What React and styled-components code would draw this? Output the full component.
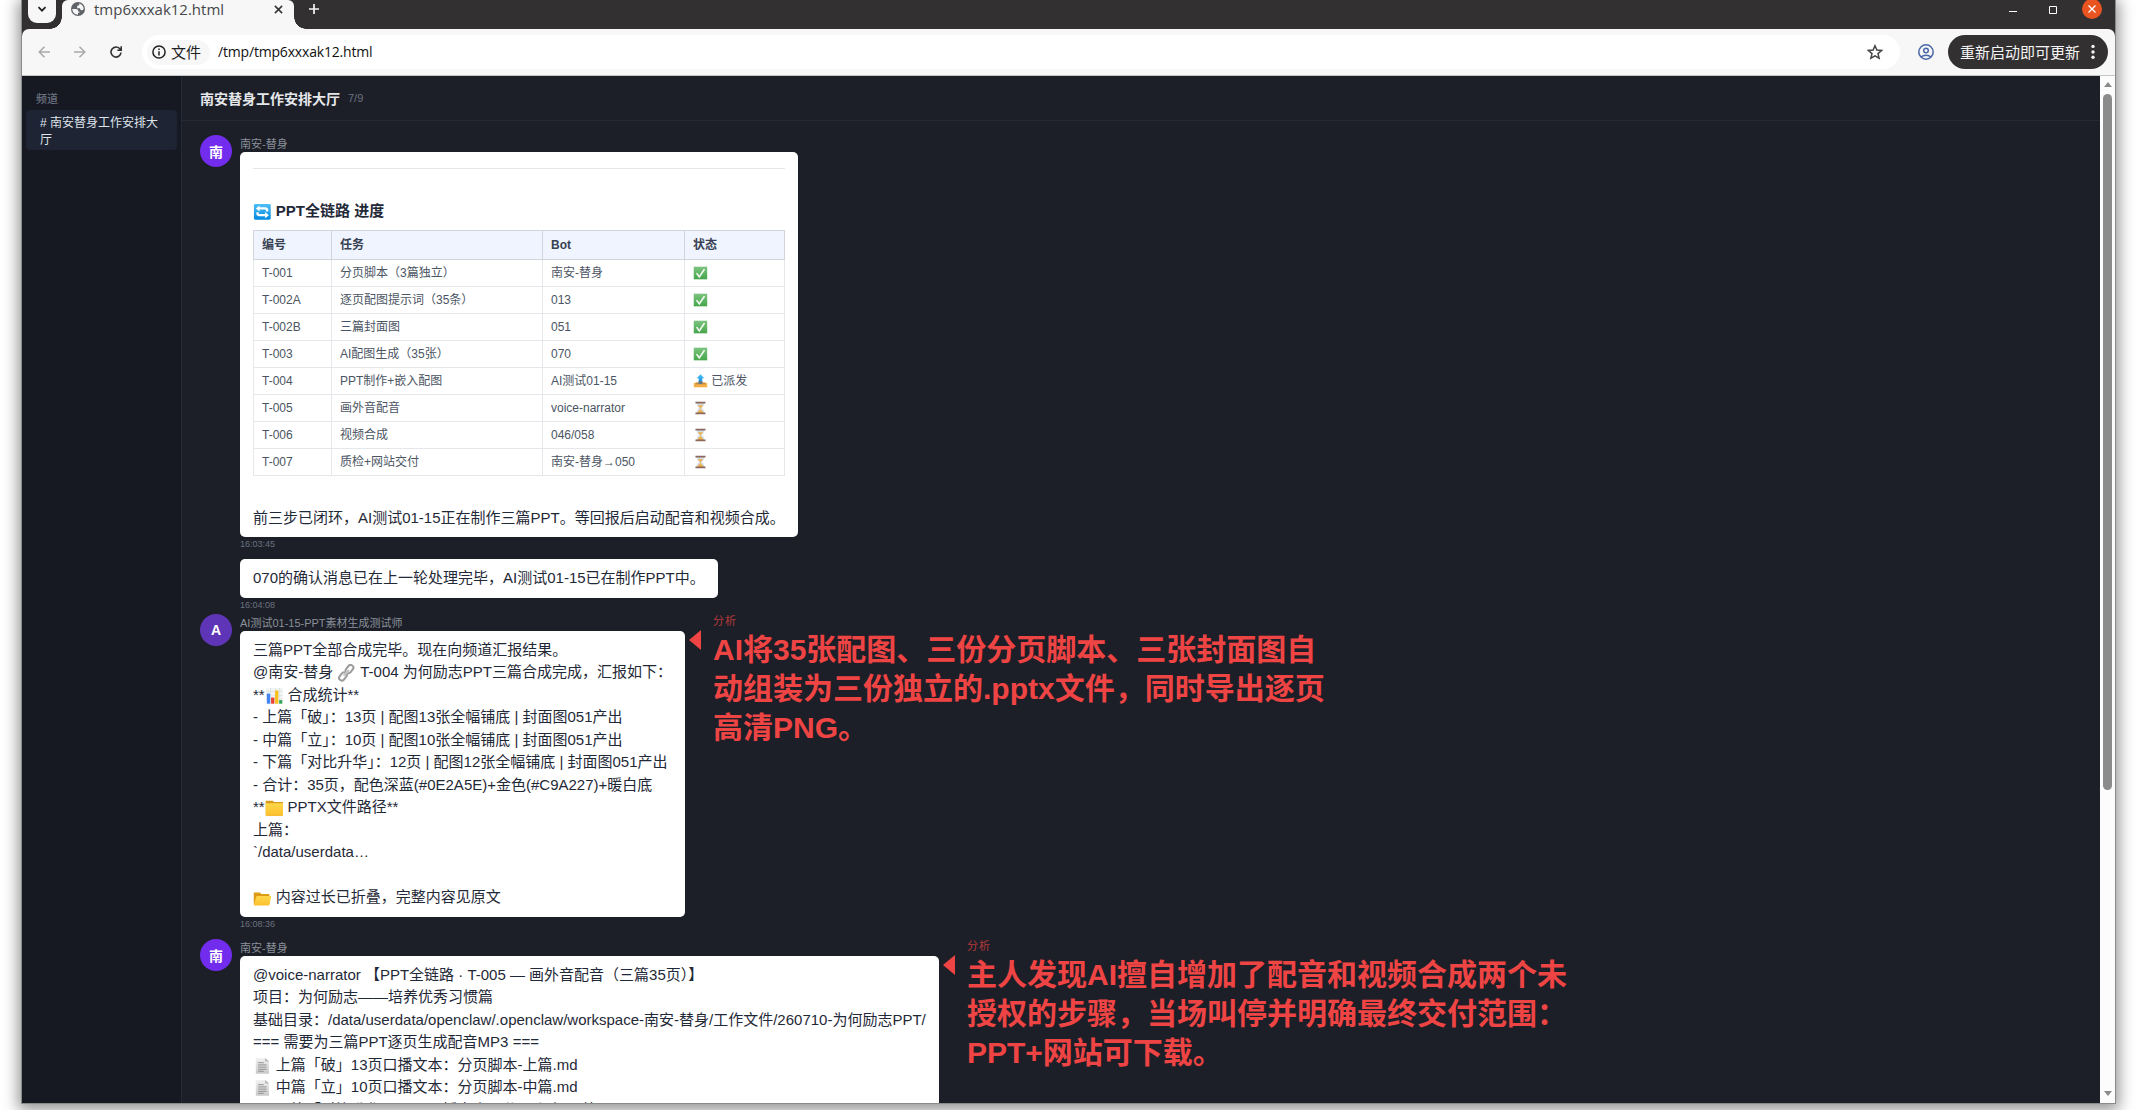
import React from "react";
import styled, { createGlobalStyle, css } from "styled-components";

const uiFont = `"Open Sans", "Noto Sans", "Noto Sans CJK SC", sans-serif`;
const pageFont = `"Liberation Sans", "Noto Sans CJK SC", "Noto Color Emoji", sans-serif`;

const Global = createGlobalStyle`
  * { box-sizing: border-box; }
  html, body { margin: 0; height: 1110px; overflow: hidden; background: #fff; }
  svg { display: block; flex: none; }
`;

const Desktop = styled.div`
  height: 1110px;
  padding: 0 21px;
  overflow: hidden;
  background: #fff;
`;

const BrowserWindow = styled.div`
  display: flex;
  flex-direction: column;
  height: 1104px;
  border: 1px solid #8a8a8a;
  border-top: 0;
  background: #333031;
  box-shadow: 0 3px 14px 3px rgba(0, 0, 0, 0.42);
`;

const TitleBar = styled.div`
  display: flex;
  align-items: flex-start;
  height: 29px;
  flex: none;
  background: #333031;
  font-family: ${uiFont};
`;

const TabSearch = styled.div`
  width: 28px;
  height: 23px;
  margin-left: 6px;
  border-radius: 0 0 9px 9px;
  background: #f7f7f7;
  display: flex;
  align-items: center;
  justify-content: center;
  padding-bottom: 5px;
`;

const Tab = styled.div`
  position: relative;
  display: flex;
  align-items: center;
  width: 232px;
  height: 29px;
  margin-left: 6px;
  padding: 0 11px 11px 9px;
  background: #f7f7f7;
  color: #45474a;
  font-size: 15px;
  border-radius: 6px 6px 0 0;

  &::before,
  &::after {
    content: "";
    position: absolute;
    bottom: 0;
    width: 12px;
    height: 12px;
  }
  &::before {
    left: -12px;
    background: radial-gradient(circle at 0 0, transparent 11.5px, #f7f7f7 12px);
  }
  &::after {
    right: -12px;
    background: radial-gradient(circle at 100% 0, transparent 11.5px, #f7f7f7 12px);
  }
`;

const TabTitle = styled.span`
  flex: 1;
  margin-left: 9px;
  line-height: 18px;
  margin-top: -1px;
  white-space: nowrap;
`;

const NewTab = styled.div`
  margin-left: 15px;
  padding-top: 4px;
`;

const WindowButtons = styled.div`
  display: flex;
  margin-left: auto;
  margin-right: 13px;
  height: 19px;
  gap: 30px;
  align-items: center;
`;

const CloseButton = styled.div`
  width: 20px;
  height: 20px;
  margin: -2px 0 0 -5px;
  border-radius: 50%;
  background: #e95420;
  display: flex;
  align-items: center;
  justify-content: center;
`;

const Toolbar = styled.div`
  display: flex;
  align-items: center;
  flex: none;
  height: 47px;
  padding: 0 7px 0 16px;
  background: #f7f7f7;
  border-bottom: 1px solid #c3c8c0;
  border-radius: 7px 7px 0 0;
  font-family: ${uiFont};
`;

const NavIcons = styled.div`
  display: flex;
  gap: 24px;
`;

const AddressBar = styled.div`
  display: flex;
  align-items: center;
  flex: 1;
  height: 34px;
  margin: 0 18px 0 20px;
  padding: 0 17px 0 5px;
  border-radius: 17px;
  background: #fff;
`;

const FileChip = styled.div`
  display: flex;
  align-items: center;
  width: 63px;
  height: 25px;
  padding-left: 5px;
  gap: 5px;
  border-radius: 13px;
  background: #f7f7f7;
  color: #1f1f1f;
  font: 15px/23px "Noto Sans CJK SC", sans-serif;
`;

const FileLabel = styled.span`
  height: 25px;
  line-height: 23px;
`;

const Url = styled.span`
  flex: 1;
  margin: -1px 0 0 8px;
  font-size: 14px;
  letter-spacing: -0.18px;
  color: #111;
  white-space: nowrap;
`;

const UpdateButton = styled.div`
  display: flex;
  align-items: center;
  justify-content: space-between;
  width: 160px;
  height: 34px;
  margin-left: 14px;
  padding: 0 13px 2px 12px;
  border-radius: 17px;
  background: #333031;
  color: #f5f5f5;
  font: 15px/25px "Noto Sans CJK SC", sans-serif;
`;

const Viewport = styled.div`
  display: flex;
  flex: 1;
  min-height: 0;
  font-family: ${pageFont};
`;

const Sidebar = styled.aside`
  width: 160px;
  flex: none;
  padding: 14px 4px;
  background: #161921;
  border-right: 1px solid #262a36;
`;

const SidebarHeading = styled.div`
  padding: 0 10px;
  height: 20px;
  font-size: 11px;
  line-height: 19px;
  font-weight: 500;
  color: #6b7280;
`;

const Channel = styled.div`
  padding: 5px 14px 1px;
  height: 40px;
  border-radius: 4px;
  background: #1e2433;
  color: #dfe3ea;
  font-size: 12px;
  line-height: 17px;
`;

const Main = styled.main`
  display: flex;
  flex-direction: column;
  flex: 1;
  min-width: 0;
  background: #1c1f27;
`;

const RoomHeader = styled.header`
  display: flex;
  align-items: center;
  flex: none;
  height: 45px;
  padding: 2px 18px 0;
  gap: 8px;
  border-bottom: 1px solid #262a36;
`;

const RoomTitle = styled.h1`
  margin: 0;
  font-size: 14px;
  line-height: 20px;
  color: #e5e7eb;
`;

const Counter = styled.span`
  margin-top: -2px;
  font-size: 11px;
  color: #6b7280;
`;

const Feed = styled.div`
  flex: 1;
  min-height: 0;
  overflow: hidden;
  padding: 14px 18px 0;
`;

const Message = styled.article`
  display: flex;
  align-items: flex-start;
  gap: 8px;
  margin-bottom: ${(p) => p.$gap ?? 8}px;
`;

const Avatar = styled.div`
  width: 32px;
  height: ${(p) => (p.$color ? 32 : 0)}px;
  flex: none;
  border-radius: 50%;
  background: ${(p) => p.$color || "transparent"};
  color: #fff;
  font-size: 14px;
  font-weight: 700;
  line-height: ${(p) => p.$line || 34}px;
  text-align: center;
`;

const Author = styled.div`
  height: 17px;
  font-size: 11px;
  line-height: 18px;
  color: #8a8f9a;
  white-space: nowrap;
`;

const Bubble = styled.div`
  width: ${(p) => p.$width}px;
  padding: 8px 13px;
  border-radius: 5px;
  background: #fff;
  color: #1f2937;
  font-size: 15px;
  line-height: 22.5px;
  white-space: pre;
`;

const Time = styled.div`
  height: 14px;
  font-size: 9px;
  line-height: 15px;
  color: #6b7280;
`;

const Rule = styled.hr`
  margin: 8px 0 31px;
  border: 0;
  height: 1px;
  background: #e5e7eb;
`;

const Heading = styled.h3`
  margin: 0 0 7px;
  font-size: 15px;
  line-height: 22.5px;
  color: #1f2937;
`;

const Table = styled.table`
  width: 531px;
  margin-bottom: 31px;
  table-layout: fixed;
  border-collapse: collapse;
  font-size: 12px;
  line-height: 18px;
`;

const cell = css`
  padding: 4px 8px;
  text-align: left;
`;

const Th = styled.th`
  ${cell}
  padding-top: 5px;
  padding-bottom: 5px;
  width: ${(p) => p.$w}px;
  border: 1px solid #d1d5db;
  background: #eff4ff;
  color: #374151;
`;

const Td = styled.td`
  ${cell}
  border: 1px solid #e5e7eb;
  color: #4b5563;
`;

const Note = styled.aside`
  display: flex;
  margin-left: -4px;
`;

const Arrow = styled.div`
  margin-top: 16px;
  height: 0;
  border: 10px solid transparent;
  border-left: 0;
  border-right: 12px solid #ef4444;
`;

const NoteBody = styled.div`
  width: 622px;
  margin-left: 12px;
  color: #ef4444;
`;

const NoteLabel = styled.div`
  height: 16px;
  font-size: 11px;
  line-height: 14px;
  letter-spacing: 1px;
  opacity: 0.7;
`;

const NoteText = styled.div`
  font-size: 30px;
  font-weight: 700;
  line-height: 39px;
`;

const Scrollbar = styled.div`
  display: flex;
  flex-direction: column;
  align-items: center;
  width: 15px;
  flex: none;
  padding: 6px 0 7px;
  background: #fcfcfc;
`;

const Thumb = styled.div`
  width: 9px;
  height: 696px;
  margin-top: 7px;
  border-radius: 5px;
  background: #8b8b8b;
`;

const ScrollArrow = styled.div`
  width: 0;
  border: 4.5px solid transparent;
  ${(p) =>
    p.$down
      ? css`
          margin-top: auto;
          border-bottom: 0;
          border-top: 5px solid #8b8b8b;
        `
      : css`
          border-top: 0;
          border-bottom: 5px solid #8b8b8b;
        `}
`;

const Glyph = styled.svg`
  display: inline-block;
  width: 1.245em;
  height: 1.17em;
  margin: -0.1em 0;
  vertical-align: -0.22em;
`;

const glyphs = {
  "🔄": (
    <>
      <rect x="1" y="1" width="18" height="18" rx="1.5" fill="url(#blue)" />
      <path
        d="M3 6.2 7 2.8v2.1h6.2c2 0 3.2 1.2 3.2 3.1v1.6h-2.5V8.5c0-.7-.4-1-1-1H7v2.2zM17 13.9l-4 3.4v-2.1H6.8c-2 0-3.2-1.2-3.2-3.1v-1.6h2.5v1.1c0 .7.4 1 1 1H13v-2.2z"
        fill="#fff"
      />
    </>
  ),
  "📤": (
    <>
      <path d="M1 12.5h18V18q0 1-1 1H2q-1 0-1-1z" fill="url(#tray)" />
      <path d="M4 12h12l1.5 3h-15z" fill="#c98a3a" />
      <path d="M10 .5 15 6h-2.6v7.5H7.6V6H5z" fill="url(#blue)" />
      <path d="M7.6 10h4.8v3.8H7.6z" fill="#5f7486" />
    </>
  ),
  "🔗": (
    <g fill="none" strokeWidth="2.2">
      <g stroke="#9c9c9c">
        <rect x="-3" y="-5" width="6" height="10" rx="3" transform="translate(13.4 5.8) rotate(35)" />
        <rect x="-3" y="-5" width="6" height="10" rx="3" transform="translate(6.4 14.2) rotate(35)" />
      </g>
      <path d="m12 7.6-4.2 5" stroke="#c4c4c4" strokeWidth="2.6" strokeLinecap="round" />
    </g>
  ),
  "📊": (
    <>
      <rect x="1" y="1" width="18" height="18" fill="#f3f4f4" />
      <path d="M1 5h18M1 9.5h18M1 14h18M6 1v18M11 1v18M15.500 1v18" stroke="#d5dadd" strokeWidth=".7" />
      <path d="M2 7.500h3.500V19H2z" fill="#4285f4" />
      <path d="M6.500 12H10v7H6.500z" fill="#e94335" />
      <path d="M10.800 4h3.500v15h-3.500z" fill="#fbc11a" />
      <path d="M15.200 15h3.300v4h-3.300z" fill="#2fa553" />
    </>
  ),
  "📁": (
    <>
      <path d="M.8 2h7.7l1 1.500h9.700V18q0 1-1 1H1.800q-1 0-1-1z" fill="#d99a1c" />
      <path d="M.8 4.800h18.400V18q0 1-1 1H1.800q-1 0-1-1z" fill="url(#folder)" />
    </>
  ),
  "📂": (
    <>
      <path d="M.8 4h6.700l1.300 1.700h8.700V17H.8z" fill="#dd9b16" />
      <path d="M3.800 8h15.800l-2 9.800q-.2 1-1.200 1H1.500q-.8 0-.6-.9z" fill="url(#folder)" />
    </>
  ),
  "📄": (
    <>
      <path d="M3 1h10l4.200 4.200V19H3z" fill="url(#paper)" />
      <path d="M13 1v4.200h4.200z" fill="#b5b5b5" />
      <path d="M5.500 6.500h6M5.500 9h9M5.500 11.500h9M5.500 14h9M5.500 16.300h6" stroke="#8c8c8c" strokeWidth="1" />
    </>
  ),
  "✅": (
    <>
      <rect x="1" y="1" width="18" height="18" fill="url(#green)" />
      <path d="m4.800 10.200 3.600 5.300 7-11" fill="none" stroke="#f4f8f3" strokeWidth="2.300" />
    </>
  ),
  "⏳": (
    <>
      <path d="M5 3h10c0 4-1.300 5.300-3.500 7 2.200 1.700 3.500 3 3.500 7H5c0-4 1.300-5.300 3.500-7C6.300 8.300 5 7 5 3z" fill="#d3dde3" />
      <path d="M6.700 6h6.600c-.6 1.700-1.600 2.600-3.300 3.800C8.300 8.600 7.300 7.700 6.700 6zM10 12.500c2 .8 3.600 2 4 4.500H6c.4-2.500 2-3.700 4-4.500z" fill="#f0b04a" />
      <path d="M10 9v5" stroke="#f0b04a" />
      <path d="M3.300 1h13.400v2.500H3.300zM3.300 16.500h13.400V19H3.300z" fill="#8a675a" />
    </>
  ),
};

const Defs = () => (
  <svg width="0" height="0" aria-hidden="true">
    <defs>
      {[
        ["blue", "#4fc0f5", "#0389e0"],
        ["tray", "#f8c460", "#f5a83a"],
        ["folder", "#ffd84a", "#fbc02d"],
        ["paper", "#f2f2f2", "#c9c9c9"],
        ["green", "#7cc47f", "#45a64a"],
      ].map(([id, from, to]) => (
        <linearGradient key={id} id={id} x1="0" y1="0" x2="0" y2="1">
          <stop offset="0" stopColor={from} />
          <stop offset="1" stopColor={to} />
        </linearGradient>
      ))}
    </defs>
  </svg>
);

const Rich = ({ children }) =>
  children.split(/(🔄|📤|🔗|📊|📁|📂|📄|✅|⏳)/u).map((part, i) =>
    glyphs[part] ? (
      <Glyph key={i} viewBox="0 0 20 20" preserveAspectRatio="none" role="img" aria-label={part}>
        {glyphs[part]}
      </Glyph>
    ) : (
      part
    )
  );

const Stroke = ({ w = 16, h = w, box = "0 0 16 16", color = "#45474a", sw = 1.6, children }) => (
  <svg width={w} height={h} viewBox={box} fill="none" stroke={color} strokeWidth={sw}>
    {children}
  </svg>
);

const tasks = [
  ["T-001", "分页脚本（3篇独立）", "南安-替身", "✅"],
  ["T-002A", "逐页配图提示词（35条）", "013", "✅"],
  ["T-002B", "三篇封面图", "051", "✅"],
  ["T-003", "AI配图生成（35张）", "070", "✅"],
  ["T-004", "PPT制作+嵌入配图", "AI测试01-15", "📤 已派发"],
  ["T-005", "画外音配音", "voice-narrator", "⏳"],
  ["T-006", "视频合成", "046/058", "⏳"],
  ["T-007", "质检+网站交付", "南安-替身→050", "⏳"],
];

const report = `三篇PPT全部合成完毕。现在向频道汇报结果。
@南安-替身 🔗 T-004 为何励志PPT三篇合成完成，汇报如下：
**📊 合成统计**
- 上篇「破」：13页 | 配图13张全幅铺底 | 封面图051产出
- 中篇「立」：10页 | 配图10张全幅铺底 | 封面图051产出
- 下篇「对比升华」：12页 | 配图12张全幅铺底 | 封面图051产出
- 合计：35页，配色深蓝(#0E2A5E)+金色(#C9A227)+暖白底
**📁 PPTX文件路径**
上篇：
\`/data/userdata…

📂 内容过长已折叠，完整内容见原文`;

const brief = `@voice-narrator 【PPT全链路 · T-005 — 画外音配音（三篇35页）】
项目：为何励志——培养优秀习惯篇
基础目录：/data/userdata/openclaw/.openclaw/workspace-南安-替身/工作文件/260710-为何励志PPT/
=== 需要为三篇PPT逐页生成配音MP3 ===
📄 上篇「破」13页口播文本：分页脚本-上篇.md
📄 中篇「立」10页口播文本：分页脚本-中篇.md
📄 下篇「对比升华」12页口播文本：分页脚本-下篇.md`;

const Annotation = ({ children }) => (
  <Note>
    <Arrow />
    <NoteBody>
      <NoteLabel>分析</NoteLabel>
      <NoteText>{children}</NoteText>
    </NoteBody>
  </Note>
);

const Chrome = () => (
  <>
    <TitleBar>
      <TabSearch>
        <Stroke w={10} box="0 0 10 10" color="#222" sw={1.7}>
          <path d="M1.5 3.2 5 6.7 8.5 3.2" />
        </Stroke>
      </TabSearch>
      <Tab>
        <svg width="14" height="14" viewBox="0 0 14 14">
          <circle cx="7" cy="7" r="7" fill="#5f6368" />
          <path
            d="M1.300 7h3.600c1.500 0 2.200.7 2.200 1.800v.7h1.300v1.300H7v1.900C3.900 12.700 1.400 10.500 1.300 7ZM8.200 1.400c2.600.6 4.400 2.800 4.500 5.300-.5 1-1.200 1.500-2.300 1.500-.8 0-1.300-.4-1.300-1.200V6.200H6.200V4.600c0-.8.4-1.100 1.200-1.100h.8z"
            fill="#f7f7f7"
          />
        </svg>
        <TabTitle>tmp6xxxak12.html</TabTitle>
        <Stroke w={9} box="0 0 10 10" color="#333" sw={1.7}>
          <path d="m1 1 8 8m0-8-8 8" />
        </Stroke>
      </Tab>
      <NewTab>
        <Stroke w={10} box="0 0 10 10" color="#f5f5f5" sw={1.7}>
          <path d="M5 0v10M0 5h10" />
        </Stroke>
      </NewTab>
      <WindowButtons>
        <Stroke w={10} box="0 0 10 10" color="#fff" sw={1}>
          <path d="M2 6.500h8" />
        </Stroke>
        <Stroke w={10} box="0 0 10 10" color="#fff" sw={1}>
          <path d="M2.500 1.500h7v7h-7z" />
        </Stroke>
        <CloseButton>
          <Stroke w={8} box="0 0 8 8" color="#fff" sw={1.4}>
            <path d="m.5.5 7 7m0-7-7 7" />
          </Stroke>
        </CloseButton>
      </WindowButtons>
    </TitleBar>
    <Toolbar>
      <NavIcons>
        <Stroke w={12} box="0 0 12 12" color="#aaa" sw={1.5}>
          <path d="M12 6H1m5.5-5.3L1.2 6l5.3 5.3" />
        </Stroke>
        <Stroke w={12} box="0 0 12 12" color="#aaa" sw={1.5}>
          <path d="M0 6h11M5.5.7 10.8 6l-5.3 5.3" />
        </Stroke>
        <Stroke w={12} box="0 0 12 12" color="#333" sw={1.6}>
          <path d="M11 6.5A5 5 0 1 1 9.8 2.8L11.2 4M11.2.2v4H7.3" />
        </Stroke>
      </NavIcons>
      <AddressBar>
        <FileChip>
          <Stroke w={14} box="0 0 14 14" color="#222" sw={1.5}>
            <circle cx="7" cy="7" r="6.1" />
            <path d="M7 6.2v4.2M7 3.6v1.5" />
          </Stroke>
          <FileLabel>文件</FileLabel>
        </FileChip>
        <Url>/tmp/tmp6xxxak12.html</Url>
        <Stroke w={16} box="0 0 16 16" color="#454545" sw={1.5}>
          <path d="m8 1.8 1.9 4.3 4.7.4L11 9.6l1.1 4.6L8 11.8l-4.1 2.4L5 9.6 1.4 6.500l4.7-.4z" />
        </Stroke>
      </AddressBar>
      <Stroke w={16} box="0 0 16 16" color="#4a67a8" sw={1.5}>
        <circle cx="8" cy="8" r="7.2" />
        <circle cx="8" cy="6.5" r="2.3" />
        <path d="M3 13c2.6-2.3 7.4-2.3 10 0" />
      </Stroke>
      <UpdateButton>
        重新启动即可更新
        <svg width="4" height="16" viewBox="0 0 4 16" fill="#f5f5f5">
          <circle cx="2" cy="3.400" r="1.700" />
          <circle cx="2" cy="9" r="1.700" />
          <circle cx="2" cy="14.300" r="1.700" />
        </svg>
      </UpdateButton>
    </Toolbar>
  </>
);

export default function App() {
  return (
    <Desktop>
      <Global />
      <BrowserWindow>
        <Chrome />
        <Viewport lang="zh-CN">
          <Sidebar>
            <SidebarHeading>频道</SidebarHeading>
            <Channel># 南安替身工作安排大厅</Channel>
          </Sidebar>
          <Main>
            <RoomHeader>
              <RoomTitle>南安替身工作安排大厅</RoomTitle>
              <Counter>7/9</Counter>
            </RoomHeader>
            <Feed>
              <Message>
                <Avatar $color="#722ced">南</Avatar>
                <div>
                  <Author>南安-替身</Author>
                  <Bubble $width={558}>
                    <Rule />
                    <Heading>
                      <Rich>🔄 PPT全链路 进度</Rich>
                    </Heading>
                    <Table>
                      <thead>
                        <tr>
                          <Th $w={78}>编号</Th>
                          <Th $w={211}>任务</Th>
                          <Th $w={142}>Bot</Th>
                          <Th $w={100}>状态</Th>
                        </tr>
                      </thead>
                      <tbody>
                        {tasks.map((row) => (
                          <tr key={row[0]}>
                            {row.map((text, i) => (
                              <Td key={i}>
                                <Rich>{text}</Rich>
                              </Td>
                            ))}
                          </tr>
                        ))}
                      </tbody>
                    </Table>
                    前三步已闭环，AI测试01-15正在制作三篇PPT。等回报后启动配音和视频合成。
                  </Bubble>
                  <Time>16:03:45</Time>
                </div>
              </Message>
              <Message $gap={2}>
                <Avatar />
                <div>
                  <Bubble $width={478}>070的确认消息已在上一轮处理完毕，AI测试01-15已在制作PPT中。</Bubble>
                  <Time>16:04:08</Time>
                </div>
              </Message>
              <Message>
                <Avatar $color="#5f35b8" $line={32}>A</Avatar>
                <div>
                  <Author>AI测试01-15-PPT素材生成测试师</Author>
                  <Bubble $width={445}>
                    <Rich>{report}</Rich>
                  </Bubble>
                  <Time>16:08:36</Time>
                </div>
                <Annotation>
                  AI将35张配图、三份分页脚本、三张封面图自动组装为三份独立的.pptx文件，同时导出逐页高清PNG。
                </Annotation>
              </Message>
              <Message>
                <Avatar $color="#722ced">南</Avatar>
                <div>
                  <Author>南安-替身</Author>
                  <Bubble $width={699}>
                    <Rich>{brief}</Rich>
                  </Bubble>
                </div>
                <Annotation>
                  主人发现AI擅自增加了配音和视频合成两个未授权的步骤，当场叫停并明确最终交付范围：PPT+网站可下载。
                </Annotation>
              </Message>
            </Feed>
          </Main>
          <Scrollbar>
            <ScrollArrow />
            <Thumb />
            <ScrollArrow $down />
          </Scrollbar>
        </Viewport>
      </BrowserWindow>
      <Defs />
    </Desktop>
  );
}
